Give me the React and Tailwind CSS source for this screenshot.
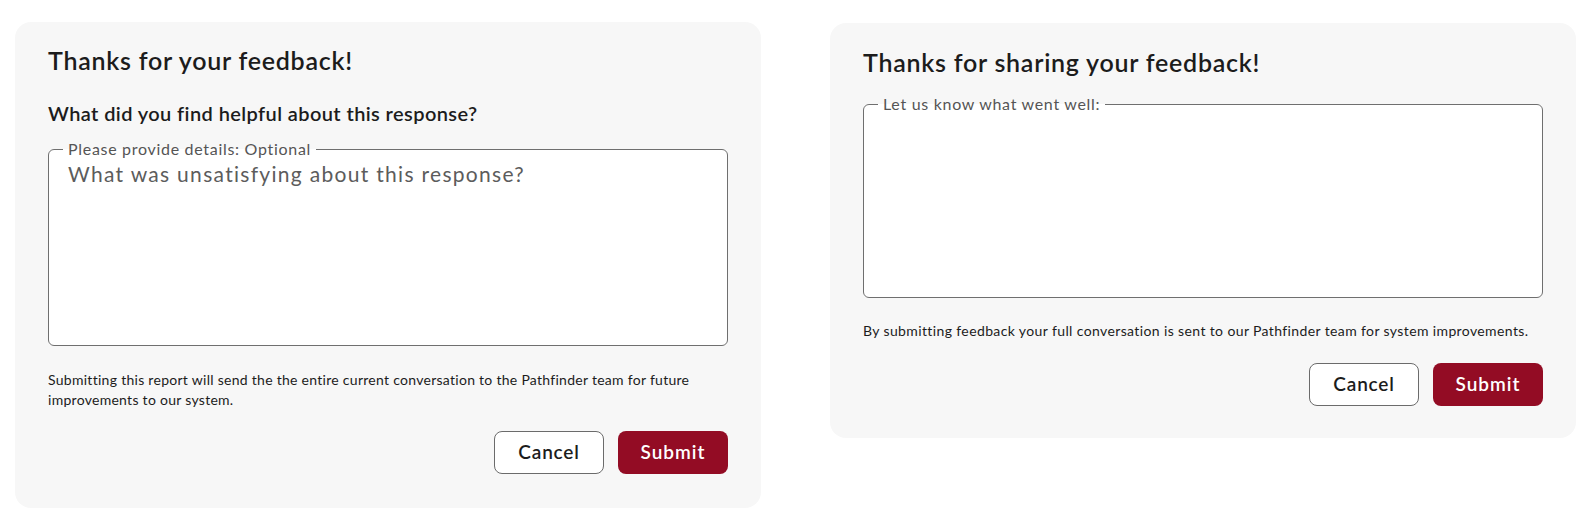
import React from 'react';

const FeedbackCard = ({ title, question, legend, placeholder, note, className }) => {
  return (
    <div className={`w-[746px] rounded-2xl bg-[#f7f7f7] px-[33px] ${className}`}>
      <h2 className="text-[25px] leading-8 font-semibold tracking-[0.75px] text-[#1c1c1c]">{title}</h2>

      {question && (
        <p className="mt-[23px] text-[20px] leading-7 font-semibold tracking-[0.4px] text-[#1c1c1c]">
          {question}
        </p>
      )}

      <fieldset
        className={`${question ? 'mt-3' : 'mt-4'} border border-[#6f6f6f] rounded-md bg-white px-[14px] pb-0`}
      >
        <legend className="px-[5px] text-base leading-5 tracking-[0.7px] text-[#555555]">{legend}</legend>
        <textarea
          className={`block w-full ${question ? 'h-[186px]' : 'h-[183px]'} resize-none bg-transparent px-[5px] pt-[1px] text-[21px] leading-7 tracking-[1.3px] text-[#333] outline-none placeholder:text-[#5c5c5c]`}
          placeholder={placeholder}
        />
      </fieldset>

      <p
        className={`${question ? 'mt-6 tracking-[0.28px]' : 'mt-[23px] tracking-[0.38px]'} text-sm leading-5 text-[#1c1c1c]`}
      >
        {note}
      </p>

      <div className={`${question ? 'mt-[21px]' : 'mt-[22px]'} flex justify-end gap-[14px]`}>
        <button className="w-[110px] h-[43px] rounded-lg border border-[#6b6b6b] bg-white text-[19px] font-semibold tracking-[0.8px] text-[#1c1c1c]">
          Cancel
        </button>
        <button className="w-[110px] h-[43px] rounded-lg bg-[#930c24] text-[19px] font-semibold tracking-[1px] text-white">
          Submit
        </button>
      </div>
    </div>
  );
};

export default function App() {
  return (
    <div className="w-[1594px] h-[526px] bg-white flex items-start gap-[69px] pl-[15px] font-['Lato',sans-serif]">
      {/* Helpful feedback */}
      <FeedbackCard
        className="mt-[22px] pt-[22px] pb-[34px]"
        title="Thanks for your feedback!"
        question="What did you find helpful about this response?"
        legend="Please provide details: Optional"
        placeholder="What was unsatisfying about this response?"
        note="Submitting this report will send the the entire current conversation to the Pathfinder team for future improvements to our system."
      />

      {/* Shared feedback */}
      <FeedbackCard
        className="mt-[23px] pt-[23px] pb-8"
        title="Thanks for sharing your feedback!"
        legend="Let us know what went well:"
        note="By submitting feedback your full conversation is sent to our Pathfinder team for system improvements."
      />
    </div>
  );
}
